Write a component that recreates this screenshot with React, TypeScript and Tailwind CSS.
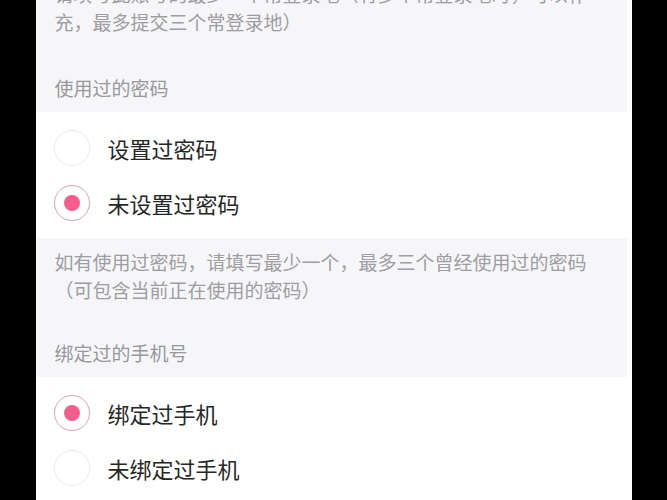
import { useState } from "react";

const FONT = { fontFamily: '"Noto Sans CJK SC", "Noto Sans", sans-serif' };

type Option = { value: string; label: string };

function RadioGroup({ options, value, onChange }: { options: Option[]; value: string; onChange: (v: string) => void }) {
  return (
    <div className="bg-white py-[8px]">
      {options.map((o) => {
        const checked = o.value === value;
        return (
          <button
            key={o.value}
            type="button"
            onClick={() => onChange(o.value)}
            className="flex h-[55px] w-full items-center gap-[18px] pl-[18px] text-left"
          >
            <span
              className={`flex h-[36px] w-[36px] items-center justify-center rounded-full border ${
                checked ? "border-[#d8a2b4]" : "border-[#ececee]"
              }`}
            >
              {checked && <span className="h-[16px] w-[16px] rounded-full bg-[#f45d8c]" />}
            </span>
            <span className="text-[22px] leading-[28px] text-[#262626]">{o.label}</span>
          </button>
        );
      })}
    </div>
  );
}

export default function App() {
  const [pwd, setPwd] = useState("no");
  const [phone, setPhone] = useState("yes");

  return (
    <div className="flex h-[500px] w-[667px] justify-center overflow-hidden bg-black" style={FONT}>
      <div className="w-[596px] bg-white">
        {/* 常登录地说明 + 使用过的密码 */}
        <div className="-mt-[30px] mr-[5px] bg-[#f6f6f8] pb-[10px] pl-[19px] pt-[10px] text-[19px] leading-[28px] text-[#9d9da2]">
          <div className="whitespace-nowrap">请填写此账号的最少一个常登录地（有多个常登录地时，可以补</div>
          <div className="whitespace-nowrap">充，最多提交三个常登录地）</div>
          <div className="mt-[38px] text-[#98989c]">使用过的密码</div>
        </div>

        <RadioGroup
          options={[
            { value: "yes", label: "设置过密码" },
            { value: "no", label: "未设置过密码" },
          ]}
          value={pwd}
          onChange={setPwd}
        />

        {/* 密码说明 + 绑定过的手机号 */}
        <div className="mr-[5px] bg-[#f6f6f8] pb-[10px] pl-[19px] pt-[10px] text-[19px] leading-[28px] text-[#9d9da2]">
          <div className="whitespace-nowrap">如有使用过密码，请填写最少一个，最多三个曾经使用过的密码</div>
          <div className="whitespace-nowrap">（可包含当前正在使用的密码）</div>
          <div className="mt-[35px] text-[#98989c]">绑定过的手机号</div>
        </div>

        <RadioGroup
          options={[
            { value: "yes", label: "绑定过手机" },
            { value: "no", label: "未绑定过手机" },
          ]}
          value={phone}
          onChange={setPhone}
        />
      </div>
    </div>
  );
}
